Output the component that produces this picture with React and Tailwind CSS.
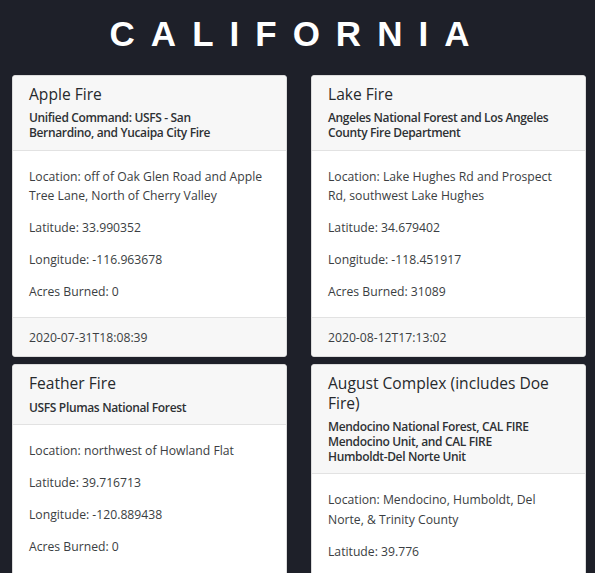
import React from "react";

const fires = [
  {
    name: "Apple Fire",
    agency: ["Unified Command: USFS - San", "Bernardino, and Yucaipa City Fire"],
    location: "off of Oak Glen Road and Apple Tree Lane, North of Cherry Valley",
    lat: "33.990352",
    lon: "-116.963678",
    acres: "0",
    date: "2020-07-31T18:08:39",
  },
  {
    name: "Lake Fire",
    agency: ["Angeles National Forest and Los Angeles", "County Fire Department"],
    location: "Lake Hughes Rd and Prospect Rd, southwest Lake Hughes",
    lat: "34.679402",
    lon: "-118.451917",
    acres: "31089",
    date: "2020-08-12T17:13:02",
  },
  {
    name: "Feather Fire",
    agency: ["USFS Plumas National Forest"],
    location: "northwest of Howland Flat",
    lat: "39.716713",
    lon: "-120.889438",
    acres: "0",
    date: "2020-08-20T07:30:12",
  },
  {
    name: "August Complex (includes Doe Fire)",
    agency: [
      "Mendocino National Forest, CAL FIRE",
      "Mendocino Unit, and CAL FIRE",
      "Humboldt-Del Norte Unit",
    ],
    location: "Mendocino, Humboldt, Del Norte, & Trinity County",
    lat: "39.776",
    lon: "-122.673",
    acres: "1032648",
    date: "2020-08-17T07:00:00",
  },
];

function Card({ f }) {
  return (
    <div className="flex flex-col bg-white border border-[#dcdcdc] rounded-[3px] overflow-hidden">
      <div className="bg-[#f7f7f7] border-b border-[#e2e2e2] px-[16px] pt-[9px] pb-[9px]">
        <h5 className="text-[15.6px] leading-[19.2px] text-[#26292c] mb-[6px] font-normal">
          {f.name}
        </h5>
        <h6 className="text-[12px] leading-[15.2px] font-semibold tracking-[-0.35px] text-[#2e3134] whitespace-nowrap">
          {f.agency.map((line, i) => (
            <span key={i} className="block">
              {line}
            </span>
          ))}
        </h6>
      </div>
      <div className="flex-1 px-[16px] pt-[16px] pb-[16px] text-[12.2px] leading-[19.2px] text-[#3b3e42]">
        <p className="mb-[12.8px]">Location: {f.location}</p>
        <p className="mb-[12.8px]">Latitude: {f.lat}</p>
        <p className="mb-[12.8px]">Longitude: {f.lon}</p>
        <p>Acres Burned: {f.acres}</p>
      </div>
      <div className="bg-[#f7f7f7] border-t border-[#e2e2e2] px-[16px] py-[9.6px] text-[12.2px] leading-[19.2px] text-[#3b3e42]">
        {f.date}
      </div>
    </div>
  );
}

export default function App() {
  return (
    <div
      className="min-h-[573px] bg-[#1e2029] pb-[20px]"
      style={{ fontFamily: '"Open Sans", "Noto Sans", sans-serif' }}
    >
      <div className="pt-[12.5px] pb-[20.5px] text-center">
        <h1
          className="text-[35px] leading-[42px] font-bold text-white tracking-[16px]"
          style={{ fontFamily: '"Liberation Sans", Arial, sans-serif' }}
        >
          CALIFORNIA
        </h1>
      </div>
      <div className="grid grid-cols-[275px_275px] gap-x-[24px] gap-y-[7px] pl-[12px]">
        {fires.map((f) => (
          <Card key={f.name} f={f} />
        ))}
      </div>
    </div>
  );
}
